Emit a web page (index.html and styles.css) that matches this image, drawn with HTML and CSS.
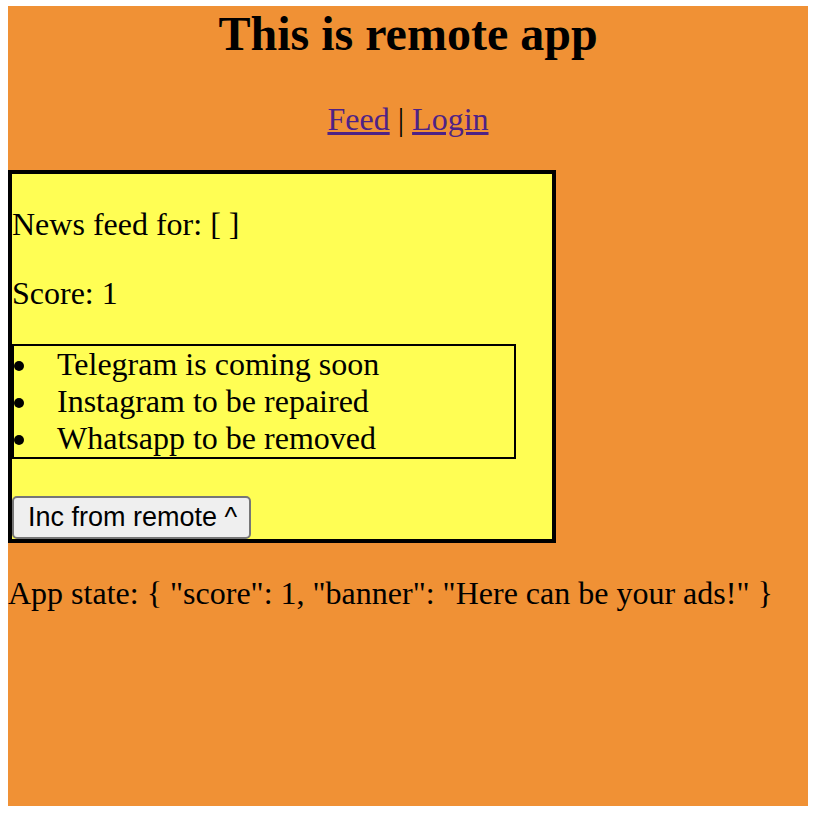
FILE: index.html
```html
<!DOCTYPE html>
<html lang="en">
<head>
<meta charset="utf-8">
<title>Remote app</title>
<link rel="stylesheet" href="styles.css">
</head>
<body>
<main class="app">
  <h1 class="title">This is remote app</h1>
  <nav class="nav"><a href="#feed">Feed</a> | <a href="#login">Login</a></nav>
  <section class="feed">
    <p>News feed for: [ ]</p>
    <p>Score: 1</p>
    <ul class="news">
      <li>Telegram is coming soon</li>
      <li>Instagram to be repaired</li>
      <li>Whatsapp to be removed</li>
    </ul>
    <button type="button" class="inc">Inc from remote ^</button>
  </section>
  <p class="state">App state: { "score": 1, "banner": "Here can be your ads!" }</p>
</main>
</body>
</html>
```
FILE: styles.css
```css
* {
  box-sizing: border-box;
}

body {
  margin: 0;
  padding: 6px 6px 8px 8px;
  background: #fff;
  color: #000;
  font: 32px/37px "Liberation Serif", "Times New Roman", serif;
}

.app {
  min-height: calc(100vh - 14px);
  background: #f09135;
  display: flow-root;
}

.title {
  margin: 0 0 40px;
  font-size: 48px;
  line-height: 55px;
  text-align: center;
}

.nav {
  margin-bottom: 32px;
  text-align: center;
}

.nav a {
  color: #4e2286;
  text-decoration-thickness: 3px;
  text-underline-offset: 2px;
}

.feed {
  width: 548px;
  max-width: 100%;
  padding-top: 32px;
  border: 4px solid #000;
  background: #fffe54;
}

.feed p {
  margin: 0 0 32px;
}

.news {
  width: 504px;
  max-width: 100%;
  margin: 0 0 37px;
  padding: 0;
  border: 2px solid #000;
  list-style: inside;
}

.inc {
  display: block;
  height: 43px;
  padding: 0 12px 2px 14px;
  border: 2px solid #767676;
  border-radius: 5px;
  background: #efefef;
  color: #000;
  font: 27px/32px "Liberation Sans", Arial, sans-serif;
}

.state {
  margin: 32px 0 0;
}
```
